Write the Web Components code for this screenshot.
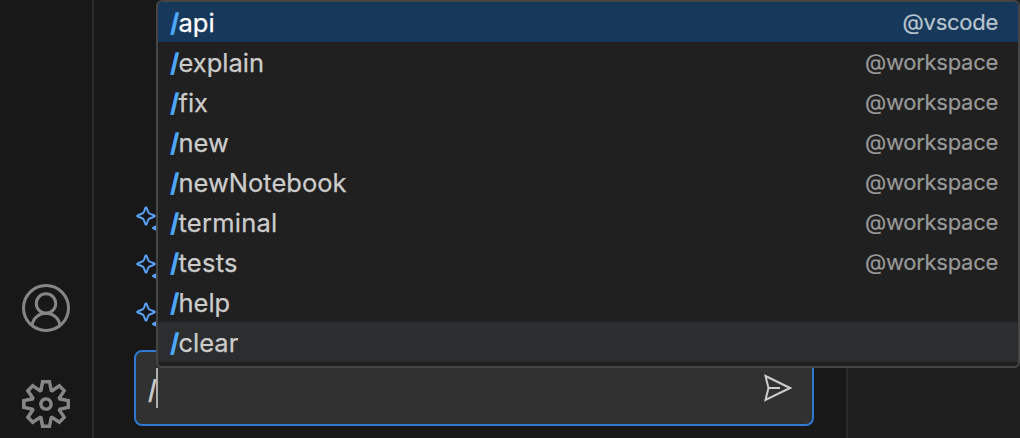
<!DOCTYPE html>
<html lang="en"><head><meta charset="utf-8"><title>Chat commands</title>
<style>html,body{margin:0;height:438px;overflow:hidden;background:#181818}body{font-family:Inter,"Liberation Sans",sans-serif}</style></head>
<body><chat-window></chat-window>
<script>
class BaseElement extends HTMLElement{
  constructor(){super();this.attachShadow({mode:'open'}).innerHTML=this.view();}
}
customElements.define('account-icon',class extends BaseElement{view(){return `<style>:host{display:block;width:48px;height:48px}svg{display:block}</style>
<svg width="48" height="48" fill="none" stroke="#868686" stroke-width="3"><circle cx="24" cy="24" r="22.5"/><circle cx="24" cy="19.5" r="9.7"/><path d="M10 41.5C11 34 17 29.3 24 29.3S37 34 38 41.5"/></svg>`}});
customElements.define('gear-icon',class extends BaseElement{view(){return `<style>:host{display:block;width:48px;height:48px}svg{display:block}</style>
<svg width="48" height="48" viewBox="0 0 24 24" fill="#868686" fill-rule="evenodd"><path d="M19.85 8.75l4.15.83v4.84l-4.15.83 2.35 3.52-3.43 3.43-3.52-2.35-.83 4.15H9.58l-.83-4.15-3.52 2.35-3.43-3.43 2.35-3.52L0 14.42V9.58l4.15-.83L1.8 5.23 5.23 1.8l3.52 2.35L9.58 0h4.84l.83 4.15 3.52-2.35 3.43 3.43-2.35 3.52zm-1.57 5.07l4-.81v-2l-4-.81-.54-1.3 2.29-3.43-1.43-1.43-3.43 2.29-1.3-.54-.81-4h-2l-.81 4-1.3.54-3.43-2.29-1.43 1.43L6.38 8.9l-.54 1.3-4 .81v2l4 .81.54 1.3-2.29 3.43 1.43 1.43 3.43-2.29 1.3.54.81 4h2l.81-4 1.3-.54 3.43 2.29 1.43-1.43-2.29-3.43.54-1.3zm-8.186-4.672A3.43 3.43 0 0 1 12 8.57 3.44 3.44 0 0 1 15.43 12a3.43 3.43 0 1 1-5.336-2.852zm.956 4.274c.281.188.612.288.95.288A1.7 1.7 0 0 0 13.71 12a1.71 1.71 0 1 0-2.66 1.422z"/></svg>`}});
customElements.define('sparkle-icon',class extends BaseElement{view(){return `<style>:host{display:block;width:32px;height:32px}svg{display:block}</style>
<svg width="32" height="32" fill="none" stroke="#59a4f9" stroke-width="2" stroke-linejoin="round"><path d="M10 1.2C11 1.2 11.3 5.3 12.7 6.9S18.9 9 18.9 10 14.1 11.7 12.7 13.1 11 18.8 10 18.8 8.7 14.7 7.3 13.1 1.1 11 1.1 10 5.9 8.3 7.3 6.9 9 1.2 10 1.2Z"/><path fill="#59a4f9" d="M17 22L21 19.8 22 17 23 21 27 22 23 23 22 27 21 24.2Z"/></svg>`}});
customElements.define('send-icon',class extends BaseElement{view(){return `<style>:host{display:block;width:28px;height:28px}svg{display:block}</style>
<svg width="28" height="28" fill="none" stroke="#ccc" stroke-width="2" stroke-linejoin="miter"><path d="M1.5 2 26 14 1.5 26 4.5 14ZM4.5 14H16"/></svg>`}});
customElements.define('activity-bar',class extends BaseElement{view(){return `<style>:host{box-sizing:border-box;width:94px;border-right:2px solid #2b2b2b;display:flex;flex-direction:column;justify-content:flex-end;gap:48px;padding:0 0 10px 22px}</style>
<account-icon></account-icon><gear-icon></gear-icon>`}});
customElements.define('chat-input',class extends BaseElement{view(){return `<style>:host{box-sizing:border-box;display:flex;align-items:center;width:680px;height:76px;border:2px solid #2f79d1;border-radius:8px;background:#313131;padding:0 20px 0 11px;color:#ccc;font-size:26px}
.value{transform:translate(.7px,1px) skewX(2deg);-webkit-text-stroke:.6px}i{width:2px;height:40px;background:#aeafad;margin-left:0}send-icon{margin-left:auto}</style>
<span class="value"><slot></slot></span><i></i><send-icon></send-icon>`}});
customElements.define('chat-panel',class extends BaseElement{view(){return `<style>:host{box-sizing:border-box;width:754px;border-right:2px solid #2b2b2b;padding:206px 0 0 40px}
.tips{box-sizing:border-box;display:flex;flex-direction:column;gap:16px;padding:0 0 0 2px;height:144px}</style>
<div class="tips"><sparkle-icon></sparkle-icon><sparkle-icon></sparkle-icon><sparkle-icon></sparkle-icon></div><chat-input>/</chat-input>`}});
customElements.define('command-row',class extends BaseElement{view(){return `<style>:host{box-sizing:border-box;height:40px;display:flex;align-items:center;justify-content:space-between;padding:2px 20px 0 12px;color:#ccc;font-size:25.5px;line-height:38px}
:host([selected]){background:#16395b;color:#fff}:host([hovered]){background:#2c2d2e}
.name{display:flex;-webkit-text-stroke:.25px}:host([wide]) .name{letter-spacing:.25px}.slash{color:#4daafc;font-weight:700;width:8.5px;flex:none;transform:translateX(-.2px) skewX(2deg);-webkit-text-stroke:.3px}
.agent{font-size:22px;color:#999;letter-spacing:-.27px;line-height:36px;margin-top:-2px;-webkit-text-stroke:.2px}:host([selected]) .agent{color:#b9c4ce}</style>
<span class="name"><span class="slash">/</span><span><slot></slot></span></span><span class="agent"><slot name="agent"></slot></span>`}});
customElements.define('command-menu',class extends BaseElement{view(){
const a=n=>`<span slot="agent">@${n}</span>`;
return `<style>:host{box-sizing:border-box;display:block;width:864px;height:368px;border:2px solid #454545;border-radius:6px;background:#202020;overflow:hidden}</style>
<command-row selected>api${a('vscode')}</command-row>${['explain','fix','new','newNotebook','terminal','tests'].map(n=>`<command-row${n[0]==='t'?' wide':''}>${n}${a('workspace')}</command-row>`).join('')}<command-row>help</command-row><command-row hovered>clear</command-row>`}});
customElements.define('chat-window',class extends BaseElement{view(){return `<style>:host{display:flex;width:1020px;height:438px;position:relative;overflow:hidden;background:#181818}
main{flex:1;background:#1f1f1f}command-menu{position:absolute;left:156px;top:0}</style>
<activity-bar></activity-bar><chat-panel></chat-panel><main></main><command-menu></command-menu>`}});
</script></body></html>
